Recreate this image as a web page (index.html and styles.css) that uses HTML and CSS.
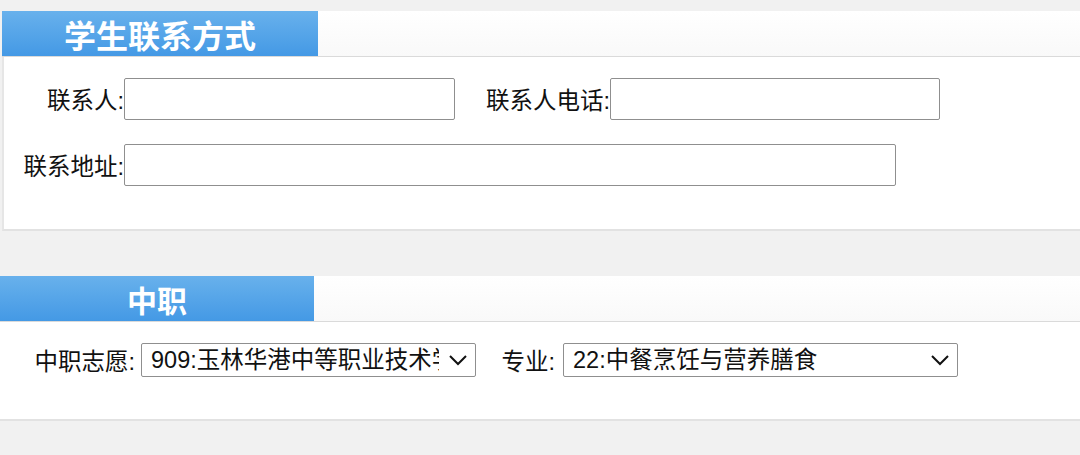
FILE: index.html
```html
<html>
    <head>
        <meta charset="utf-8">
        <link rel="stylesheet" href="styles.css">
    </head>
    <body>

    <div class="section section-contact">
        <div class="sec-head">
            <div class="sec-tab">学生联系方式</div>
        </div>
        <div class="sec-body">
            <div class="form-row">
                <label class="label label-short">联系人:</label>
                <input class="field field-name" type="text">
                <label class="label label-phone">联系人电话:</label>
                <input class="field field-phone" type="text">
            </div>
            <div class="form-row">
                <label class="label label-short">联系地址:</label>
                <input class="field field-address" type="text">
            </div>
        </div>
    </div>

    <div class="section section-school">
        <div class="sec-head">
            <div class="sec-tab">中职</div>
        </div>
        <div class="sec-body">
            <div class="form-row">
                <label class="label label-wish">中职志愿:</label>
                <span class="select-wrap select-school">
                    <select class="picker">
                        <option>909:玉林华港中等职业技术学校</option>
                    </select>
                    <svg class="chevron" viewBox="0 0 20 12" width="20" height="12"><path d="M2 2 L10 10 L18 2" fill="none" stroke="#111" stroke-width="2"/></svg>
                </span>
                <label class="label label-major">专业:</label>
                <span class="select-wrap select-major">
                    <select class="picker">
                        <option>22:中餐烹饪与营养膳食</option>
                    </select>
                    <svg class="chevron" viewBox="0 0 20 12" width="20" height="12"><path d="M2 2 L10 10 L18 2" fill="none" stroke="#111" stroke-width="2"/></svg>
                </span>
            </div>
        </div>
    </div>

    </body>
</html>
```

FILE: styles.css
```css
body {
    margin: 0;
    padding-top: 11px;
    background-color: #f1f1f1;
    font-family: "Liberation Sans", "Noto Sans CJK SC", sans-serif;
    font-size: 23.5px;
    color: #111;
}

.section {
    background-color: white;
}
.section-contact {
    margin-left: 2px;
}
.section-school {
    margin-top: 45px;
}

.sec-head {
    display: flex;
    height: 45px;
    background: linear-gradient(#ffffff, #f9f9f9);
    border-bottom: 1px solid #dadada;
}
.sec-tab {
    width: 316px;
    display: flex;
    align-items: center;
    justify-content: center;
    background: linear-gradient(#68b1ec, #4499e5);
    color: white;
    font-family: "Noto Sans CJK SC", sans-serif;
    font-weight: bold;
    font-size: 32px;
}
.section-school .sec-tab {
    width: 314px;
    font-size: 30px;
}

.sec-body {
    border-left: 2px solid #e6e6e6;
    border-bottom: 2px solid #e2e2e2;
    padding: 21px 0 43px 0;
}
.section-school .sec-body {
    border-left: none;
    padding-bottom: 42px;
}

.form-row {
    display: flex;
    align-items: center;
}
.form-row + .form-row {
    margin-top: 24px;
}

.label {
    text-align: right;
    white-space: nowrap;
}
.label-short {
    width: 120px;
}
.label-phone {
    width: 155px;
}
.label-wish {
    width: 135px;
    margin-right: 6px;
}
.label-major {
    width: 79px;
    margin-right: 8px;
}

.field {
    height: 42px;
    box-sizing: border-box;
    border: 1px solid #8f8f8f;
    border-radius: 2px;
    background: white;
    font-size: 20px;
}
.field-name { width: 331px; }
.field-phone { width: 330px; }
.field-address { width: 772px; }

.select-wrap {
    position: relative;
    display: inline-block;
}
.picker {
    appearance: none;
    -webkit-appearance: none;
    height: 34px;
    box-sizing: border-box;
    border: 1px solid #8f8f8f;
    border-radius: 2px;
    background: white;
    color: #111;
    padding: 0 36px 0 9px;
    font-family: "Liberation Sans", "Noto Sans CJK SC", sans-serif;
    font-size: 23.5px;
    display: block;
}
.select-school .picker { width: 335px; }
.select-major .picker { width: 395px; }

.chevron {
    position: absolute;
    right: 8px;
    top: 11px;
    pointer-events: none;
}
```
